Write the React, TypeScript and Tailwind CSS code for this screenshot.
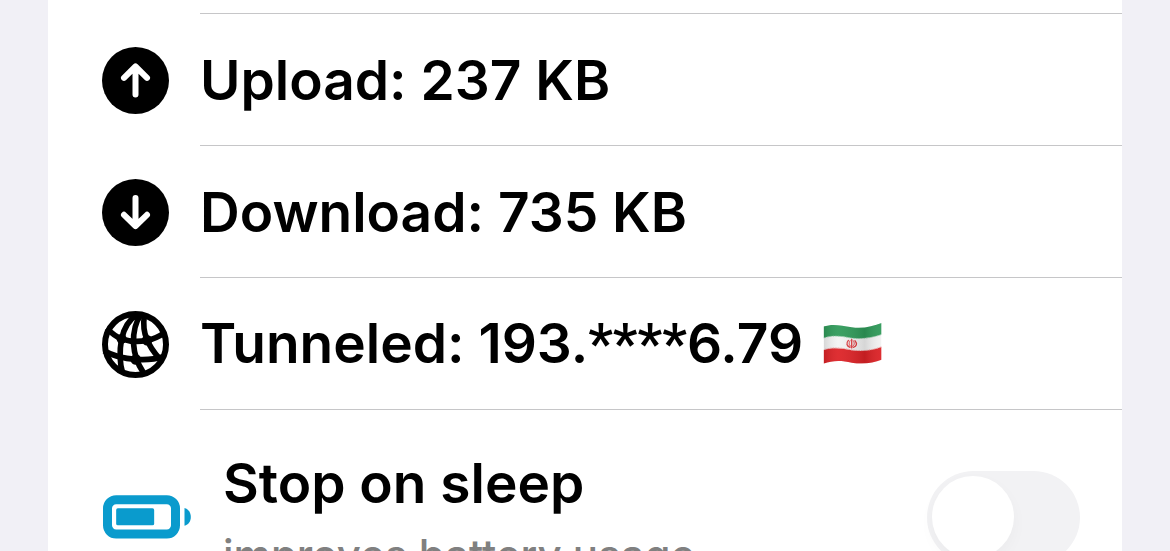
import React, { useState } from "react";
import type { ReactNode } from "react";

function ArrowCircleIcon({ direction }: { direction: "up" | "down" }) {
  return (
    <svg viewBox="0 0 67 67" className="w-[67px] h-[67px] shrink-0" aria-hidden="true">
      <circle cx="33.5" cy="33.5" r="33.5" fill="#000" />
      <path
        d={direction === "up" ? "M33.5 47.5V20M22 30.8 33.5 19.5 45 30.8" : "M33.5 19V46.5M22 35.8 33.5 47 45 35.8"}
        fill="none"
        stroke="#fff"
        strokeWidth="6"
        strokeLinecap="round"
        strokeLinejoin="round"
      />
    </svg>
  );
}

function GlobeIcon() {
  return (
    <svg viewBox="36 32 202 202" className="w-[67px] h-[67px] shrink-0" aria-hidden="true">
      <g fill="none" stroke="#000" strokeWidth="17">
        <circle cx="137" cy="133" r="92" strokeWidth="18" />
        {/* Meridians */}
        <path d="M142 42C112 62 101 88 95 116C89 150 88 185 98 218" />
        <path d="M154 42C136 66 130 100 131 130C133 160 142 190 160 216" />
        <path d="M164 42C160 70 162 98 172 118C180 140 192 156 208 174" />
        {/* Parallels */}
        <path d="M50 84C64 98 78 110 95 116C118 124 146 126 172 120C192 117 210 108 226 96" />
        <path d="M42 152C70 168 104 176 138 178C168 180 196 178 220 170" />
      </g>
      <circle cx="95" cy="116" r="15" />
      <circle cx="172" cy="120" r="16" />
      <circle cx="138" cy="178" r="16" />
    </svg>
  );
}

function BatteryIcon() {
  return (
    <svg viewBox="36 44 266 132" className="w-[89px] h-[44px] shrink-0" fill="#0a9bcd" aria-hidden="true">
      <rect x="52" y="58" width="204" height="103" rx="26" fill="none" stroke="#0a9bcd" strokeWidth="27" />
      <rect x="78" y="84" width="114" height="51" rx="5" />
      <path d="M283 83C295 86 302 97 302 110C302 123 295 133 283 136Z" />
    </svg>
  );
}

function FlagIcon() {
  return (
    <svg viewBox="38 38 180 128" className="w-[60px] h-[42px] shrink-0" role="img" aria-label="Iran">
      <defs>
        <clipPath id="flag-shape">
          <path d="M38 49C66 39 92 46 124 51C158 56 190 48 215 38V150C190 160 158 165 124 159C92 152 66 152 38 162Z" />
        </clipPath>
        <linearGradient id="flag-shade" x1="0" x2="1" y1="0" y2="0">
          <stop offset="0" stopColor="#000" stopOpacity="0.12" />
          <stop offset="0.25" stopColor="#fff" stopOpacity="0.06" />
          <stop offset="0.7" stopColor="#000" stopOpacity="0.12" />
          <stop offset="1" stopColor="#fff" stopOpacity="0.05" />
        </linearGradient>
      </defs>
      <g clipPath="url(#flag-shape)">
        <rect x="38" y="36" width="180" height="130" fill="#f3f3f3" />
        <path d="M38 30H218V72C190 82 158 88 124 84C92 78 66 74 38 84Z" fill="#2f9a59" />
        <path d="M38 121C66 111 92 115 124 121C158 126 190 122 218 110V170H38Z" fill="#dd2226" />
        <g fill="none" strokeWidth="3" strokeDasharray="3 2">
          <path d="M38 84C66 74 92 78 124 84C158 88 190 82 218 72" stroke="#8fc9a6" />
          <path d="M38 120C66 110 92 114 124 120C158 125 190 121 218 109" stroke="#f09a9a" />
        </g>
        <g fill="none" stroke="#df3a3e" strokeWidth="4" strokeLinecap="round">
          <path d="M124 88V114" />
          <path d="M114 91C106 100 109 108 119 112" />
          <path d="M134 92C142 101 139 109 129 112" />
          <path d="M119 92C114 100 116 106 121 109M129 92C134 100 132 106 127 109" strokeWidth="3" />
        </g>
        <rect x="38" y="36" width="180" height="130" fill="url(#flag-shade)" />
      </g>
    </svg>
  );
}

function StatRow({ icon, children }: { icon: ReactNode; children: ReactNode }) {
  return (
    <li className="flex items-center gap-[31px] pl-[54px]">
      {icon}
      <div className="flex flex-1 items-center gap-5 h-[132px] border-b border-[#c6c6c8] whitespace-nowrap">
        {children}
      </div>
    </li>
  );
}

export default function App() {
  const [stopOnSleep, setStopOnSleep] = useState(false);

  return (
    <main className="h-screen overflow-hidden bg-[#f1f0f6] px-12 font-['Inter',sans-serif] text-[55px] leading-[68px] font-semibold text-black">
      <section className="min-h-full bg-white">
        <div className="ml-[152px] h-[14px] border-b border-[#c6c6c8]" />
        <ul>
          <StatRow icon={<ArrowCircleIcon direction="up" />}>
            <span>Upload: 237 KB</span>
          </StatRow>
          <StatRow icon={<ArrowCircleIcon direction="down" />}>
            <span>Download: 735 KB</span>
          </StatRow>
          <StatRow icon={<GlobeIcon />}>
            <span>
              Tunneled: 193.<span className="font-['Roboto',sans-serif]">****</span>6.79
            </span>
            <FlagIcon />
          </StatRow>
        </ul>

        {/* Sleep setting */}
        <div className="flex items-center gap-8 h-[214px] pl-[54px] pr-[42px]">
          <BatteryIcon />
          <label htmlFor="stop-on-sleep" className="flex-1 whitespace-nowrap">
            <span className="block">Stop on sleep</span>
            <span className="block mt-2 text-[42px] leading-[60px] font-medium text-[#808080]">improves battery usage</span>
          </label>
          <input
            id="stop-on-sleep"
            type="checkbox"
            role="switch"
            checked={stopOnSleep}
            onChange={(e) => setStopOnSleep(e.target.checked)}
            className="flex h-[93px] w-[153px] shrink-0 appearance-none items-center rounded-full bg-[#f2f2f4] px-[5px] before:size-[82px] before:rounded-full before:bg-white before:shadow-[0_6px_16px_rgba(0,0,0,0.03)] checked:justify-end checked:bg-[#34c759]"
          />
        </div>
      </section>
    </main>
  );
}
